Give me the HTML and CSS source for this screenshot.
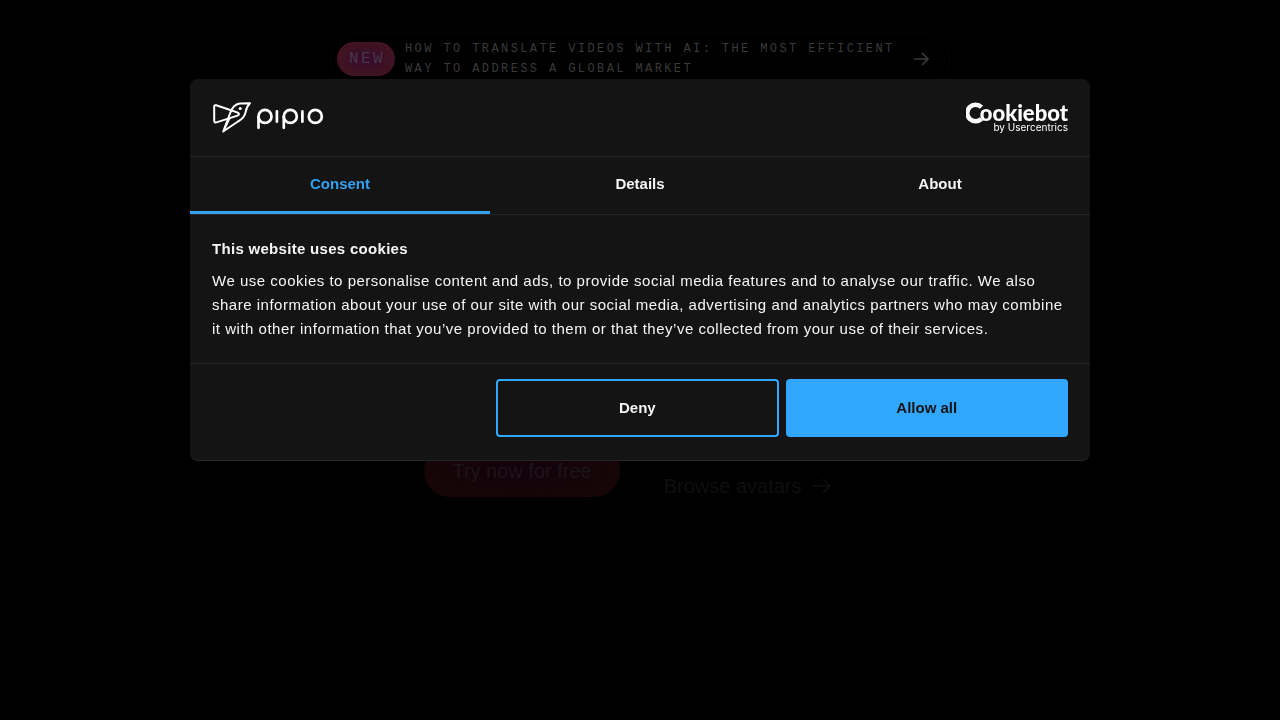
FILE: index.html
```html
<!DOCTYPE html>
<html lang="en">

<head>
  <title>Pipio</title>
  <meta charset="UTF-8">
  <meta name="viewport" content="width=device-width, initial-scale=1.0">
  <link rel="stylesheet" href="styles.css">
</head>

<body>
  <main class="hero">
    <a class="announcement" href="#">
      <span class="badge">NEW</span>
      <span class="announcement-text">How to translate videos with AI: the most efficient way to address a global market</span>
      <svg class="arrow" viewBox="0 0 20 20" aria-hidden="true">
        <path d="M3 10h14M11 4l6 6-6 6" />
      </svg>
    </a>
    <div class="hero-actions">
      <a class="try-btn" href="#">Try now for free</a>
      <a class="browse-link" href="#">Browse avatars
        <svg class="arrow" viewBox="0 0 20 20" aria-hidden="true">
          <path d="M1 10h17M11 3l7 7-7 7" />
        </svg>
      </a>
    </div>
  </main>

  <div class="overlay">
    <div class="dialog" role="dialog" aria-labelledby="dialog-title">
      <div class="dialog-header">
        <svg class="logo" viewBox="0 0 112 34" role="img" aria-label="pipio">
          <g fill="none" stroke="#fff" stroke-width="2" stroke-linejoin="round" stroke-linecap="round">
            <path d="M19 9.200L4.200 4.300Q2.200 3.700 2.200 5.700V19.500Q2.200 22 4.400 21.400L25.500 14.600Q28.300 13.300 25.800 11.600L19 9.200" />
            <path d="M11.200 30.500L18 12.500Q20.800 3.500 27.800 2.400L38 2.200Q34.800 5 33.800 10.400Q32.600 17 26 20.500L11.200 30.500L17.500 17.200" />
          </g>
          <circle cx="28.200" cy="7.400" r="1.500" fill="#fff" />
          <g fill="none" stroke="#fff" stroke-width="2.700" stroke-linecap="round">
            <path d="M46.500 26.800V15.500M71.800 26.800V15.500M64.900 10.300V20.700M90.400 10.300V20.700" />
            <circle cx="53" cy="15.400" r="6.500" />
            <circle cx="78.300" cy="15.400" r="6.500" />
            <circle cx="103.300" cy="15.400" r="6.500" />
          </g>
        </svg>
        <a class="powered" href="#" aria-label="Cookiebot by Usercentrics">
          <span class="powered-name"><svg class="powered-c" viewBox="0 0 17 22" aria-hidden="true">
              <path d="M15.500 5.200A8.300 8.300 0 1 0 15.500 16.800" />
            </svg>ookiebot</span>
          <span class="powered-by">by Usercentrics</span>
        </a>
      </div>

      <div class="tabs" role="tablist">
        <button class="tab active" role="tab" aria-selected="true">Consent</button>
        <button class="tab" role="tab" aria-selected="false">Details</button>
        <button class="tab" role="tab" aria-selected="false">About</button>
      </div>

      <div class="dialog-body">
        <h2 id="dialog-title">This website uses cookies</h2>
        <p>We use cookies to personalise content and ads, to provide social media features and to analyse our traffic. We also share information about your use of our site with our social media, advertising and analytics partners who may combine it with other information that you’ve provided to them or that they’ve collected from your use of their services.</p>
      </div>

      <div class="dialog-footer">
        <button class="btn btn-deny">Deny</button>
        <button class="btn btn-allow">Allow all</button>
      </div>
    </div>
  </div>
</body>

</html>
```
FILE: styles.css
```css
* {
  box-sizing: border-box;
}

body {
  margin: 0;
  background-color: #000;
  color: #f5f5f5;
  font-family: "Liberation Sans", Arial, sans-serif;
}

a {
  color: inherit;
  text-decoration: none;
}

/* page behind the dialog */
.hero {
  display: flex;
  flex-direction: column;
  align-items: center;
  min-height: 100vh;
  padding-top: 33px;
}

.announcement {
  display: flex;
  align-items: center;
  gap: 10px;
  width: 100%;
  max-width: 620px;
  padding: 5px 18px 5px 6px;
  border: 1px solid #060606;
  border-radius: 26px;
  color: #3a3a3a;
  font-family: "Liberation Mono", monospace;
  letter-spacing: 0.2em;
}

.badge {
  padding: 7px 10px 7px 12px;
  border-radius: 18px;
  background: radial-gradient(#360b2c, #45171c);
  color: #44364c;
  font-size: 16px;
  line-height: 20px;
  letter-spacing: 0.15em;
}

.announcement-text {
  flex: 1;
  font-size: 12px;
  line-height: 20px;
  letter-spacing: 0.2em;
  text-transform: uppercase;
}

.arrow {
  flex: none;
  width: 20px;
  height: 20px;
  fill: none;
  stroke: currentColor;
  stroke-width: 1.6;
}

.hero-actions {
  display: flex;
  align-items: center;
  gap: 44px;
  margin-top: 360px;
  font-size: 20px;
  line-height: 24px;
}

.try-btn {
  padding: 14px 28px;
  margin-bottom: 30px;
  border-radius: 26px;
  background: radial-gradient(#12020b, #180706);
  color: #1c151a;
}

.browse-link {
  display: flex;
  align-items: center;
  gap: 10px;
  margin-right: 24px;
  color: #0f0f0f;
}

/* cookie dialog */
.overlay {
  position: fixed;
  inset: 0;
  display: flex;
  justify-content: center;
  align-items: flex-start;
  padding: 79px 16px 16px;
}

.dialog {
  width: 100%;
  max-width: 900px;
  overflow: hidden;
  border-bottom: 1px solid #262626;
  border-radius: 8px;
  background-color: #141414;
  font-size: 15px;
  line-height: 24px;
}

.dialog-header {
  display: flex;
  justify-content: space-between;
  align-items: center;
  height: 78px;
  padding: 0 22px;
  border-bottom: 1px solid #262626;
}

.logo {
  width: 112px;
  height: 34px;
}

.powered {
  display: flex;
  flex-direction: column;
  align-items: flex-end;
  color: #fff;
}

.powered-name {
  display: flex;
  align-items: center;
  height: 18px;
  font-family: Lato, sans-serif;
  font-size: 22px;
  font-weight: 900;
  line-height: 18px;
}

.powered-c {
  width: 17px;
  height: 22px;
  margin-right: -3px;
  fill: none;
  stroke: #fff;
  stroke-width: 4.5;
}

.powered-by {
  font-family: Inter, sans-serif;
  font-size: 10px;
  line-height: 10px;
}

.tabs {
  display: flex;
  border-bottom: 1px solid #262626;
}

.tab {
  flex: 1;
  padding: 15px 8px;
  border: none;
  border-bottom: 3px solid transparent;
  background: none;
  color: inherit;
  font: inherit;
  font-weight: bold;
  cursor: pointer;
}

.tab.active {
  border-bottom-color: #32a1f0;
  color: #32a1f0;
}

.dialog-body {
  padding: 22px;
}

.dialog-body h2 {
  margin: 0 0 8px;
  font-size: 15px;
  line-height: 24px;
  letter-spacing: 0.02em;
}

.dialog-body p {
  margin: 0;
  letter-spacing: 0.034em;
}

.dialog-footer {
  display: flex;
  justify-content: flex-end;
  gap: 7px;
  padding: 15px 22px 23px;
  border-top: 1px solid #262626;
}

.btn {
  width: 33%;
  padding: 15px;
  border: 2px solid #32a7ff;
  border-radius: 4px;
  background: none;
  color: inherit;
  font: inherit;
  font-weight: bold;
  cursor: pointer;
}

.btn-allow {
  background-color: #32a7ff;
  color: #141414;
}
```
